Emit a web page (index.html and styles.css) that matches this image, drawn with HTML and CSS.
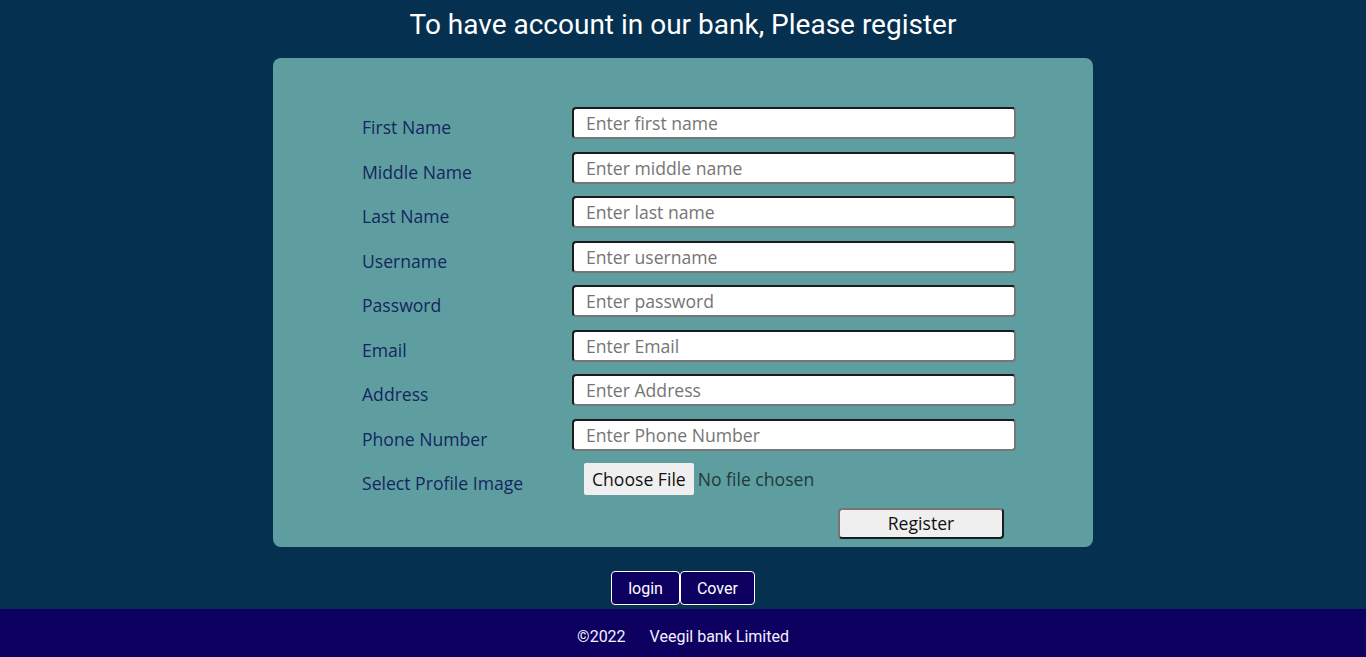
FILE: index.html
```html
<!DOCTYPE html>
<html lang="en">
<head>
<meta charset="utf-8">
<title>Register</title>
<link rel="stylesheet" href="styles.css">
</head>
<body>
<main class="page">
  <h1 class="title">To have account in our bank, Please register</h1>
  <form class="card">
    <div class="grid">
      <label class="lbl" for="fn">First Name</label>
      <input class="field" id="fn" type="text" placeholder="Enter first name">
      <label class="lbl" for="mn">Middle Name</label>
      <input class="field" id="mn" type="text" placeholder="Enter middle name">
      <label class="lbl" for="ln">Last Name</label>
      <input class="field" id="ln" type="text" placeholder="Enter last name">
      <label class="lbl" for="un">Username</label>
      <input class="field" id="un" type="text" placeholder="Enter username">
      <label class="lbl" for="pw">Password</label>
      <input class="field" id="pw" type="password" placeholder="Enter password">
      <label class="lbl" for="em">Email</label>
      <input class="field" id="em" type="email" placeholder="Enter Email">
      <label class="lbl" for="ad">Address</label>
      <input class="field" id="ad" type="text" placeholder="Enter Address">
      <label class="lbl" for="ph">Phone Number</label>
      <input class="field" id="ph" type="tel" placeholder="Enter Phone Number">
      <label class="lbl" for="img">Select Profile Image</label>
      <div class="file">
        <label class="file-btn" for="img">Choose File</label>
        <span class="file-name">No file chosen</span>
        <input class="file-input" id="img" type="file">
      </div>
      <span class="spacer"></span>
      <div class="submit-row">
        <button class="register" type="submit">Register</button>
      </div>
    </div>
  </form>
  <nav class="links">
    <a class="link-btn" href="#">login</a>
    <a class="link-btn" href="#">Cover</a>
  </nav>
</main>
<footer class="footer">
  <span>©2022</span>
  <span>Veegil bank Limited</span>
</footer>
</body>
</html>
```
FILE: styles.css
```css
* { box-sizing: border-box; }
html, body { margin: 0; padding: 0; }
body {
  background: #05304f;
  font-family: "Open Sans", "Liberation Sans", sans-serif;
  min-height: 657px;
  display: flex;
  flex-direction: column;
}
.page {
  flex: 1;
  display: flex;
  flex-direction: column;
  align-items: center;
}
.title {
  margin: 0;
  padding-top: 7px;
  font-family: Roboto, "Liberation Sans", sans-serif;
  font-weight: 400;
  font-size: 28px;
  line-height: 36px;
  color: #ffffff;
  text-align: center;
}
.card {
  margin-top: 15px;
  width: 820px;
  background: #5f9ea0;
  border-radius: 8px;
  padding: 49px 77px 7.5px 89px;
}
.grid {
  display: grid;
  grid-template-columns: 210px 444px;
  grid-auto-rows: 32px;
  row-gap: 12.5px;
}
.lbl {
  align-self: end;
  font-size: 17.6px;
  line-height: 24px;
  color: #13275e;
  white-space: nowrap;
  margin-bottom: 0;
}
.field {
  width: 100%;
  height: 32px;
  margin: 0;
  padding: 0 12px;
  font-family: "Open Sans", "Liberation Sans", sans-serif;
  font-size: 17.6px;
  color: #222;
  background: #ffffff;
  border: 2px solid;
  border-color: #1b1b1b #767676 #767676 #1b1b1b;
  border-radius: 4px;
  outline: none;
}
.field::placeholder { color: #757575; opacity: 1; }
.file {
  display: flex;
  align-items: center;
  padding-left: 12px;
}
.file-btn {
  height: 32px;
  display: flex;
  align-items: center;
  padding: 0 8px;
  background: #efefef;
  color: #111;
  font-size: 17.6px;
  border-radius: 2px;
  margin-right: 4px;
  cursor: pointer;
}
.file-name {
  font-size: 17.6px;
  color: #1e3a3b;
}
.file-input { display: none; }
.submit-row {
  display: flex;
  justify-content: flex-end;
  padding-right: 12px;
}
.register {
  width: 166px;
  height: 31px;
  margin: 0;
  padding: 0;
  background: #efefef;
  color: #111;
  font-family: "Open Sans", "Liberation Sans", sans-serif;
  font-size: 17.6px;
  line-height: 25px;
  border: 2px solid;
  border-color: #767676 #1b1b1b #1b1b1b #767676;
  border-radius: 4px;
}
.links {
  display: flex;
  margin-top: 24px;
  margin-bottom: 4px;
}
.link-btn {
  display: flex;
  align-items: center;
  justify-content: center;
  height: 34px;
  padding: 0 16px;
  background: #0d0060;
  color: #ffffff;
  border: 1px solid #ffffff;
  border-radius: 4px;
  font-family: Roboto, "Liberation Sans", sans-serif;
  font-size: 16px;
  font-weight: 400;
  text-decoration: none;
}
.footer {
  height: 48px;
  padding-top: 6px;
  background: #0d0060;
  display: flex;
  justify-content: center;
  align-items: center;
  gap: 24px;
  color: #f2f0ff;
  font-family: Roboto, "Liberation Sans", sans-serif;
  font-size: 16px;
  font-weight: 400;
}
```
